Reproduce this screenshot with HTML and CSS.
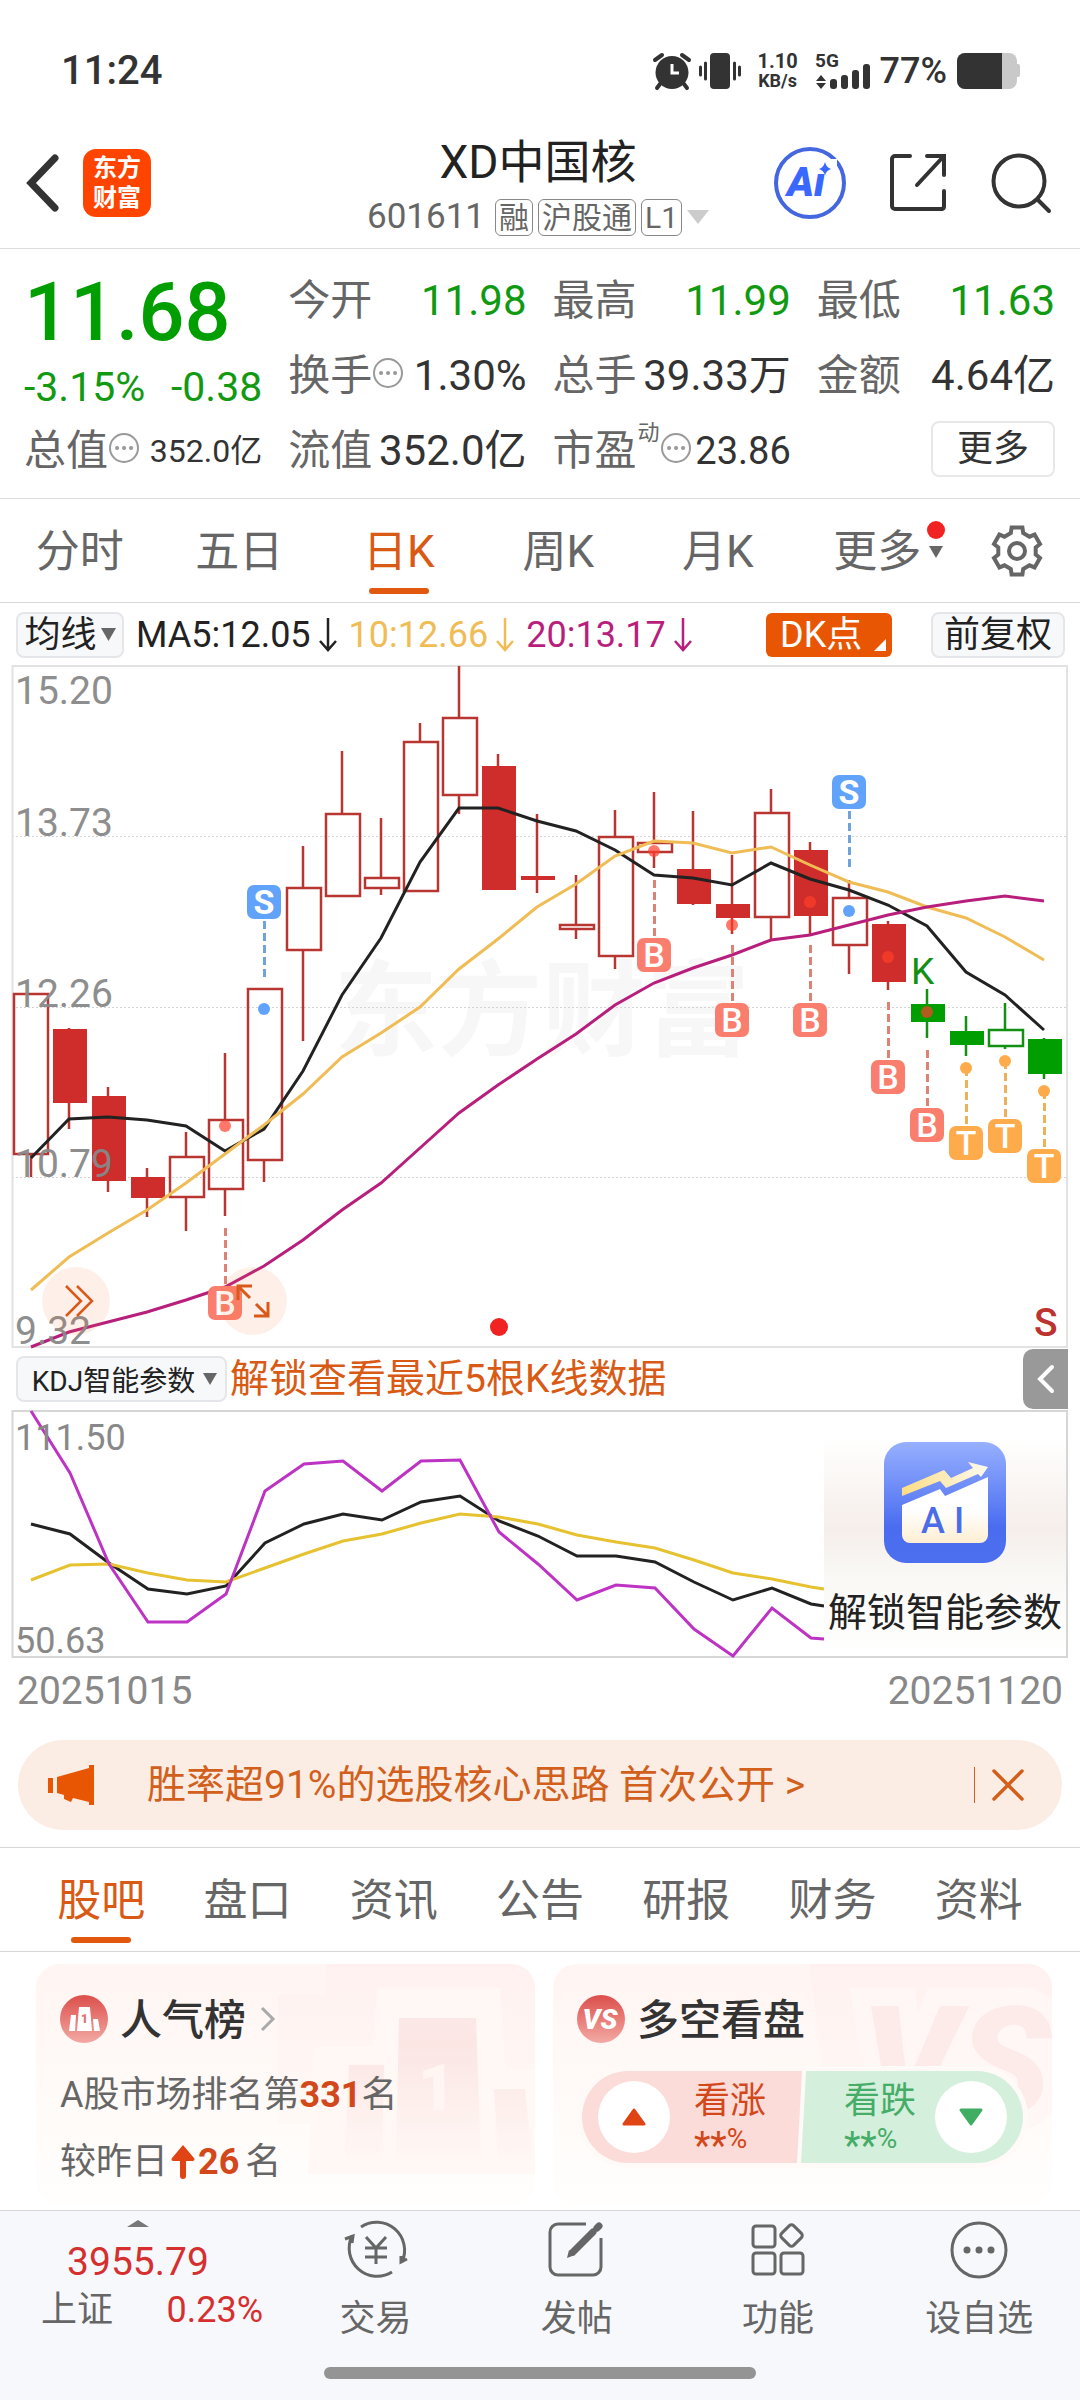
FILE: index.html
```html
<!DOCTYPE html>
<html lang="zh-CN">
<head>
<meta charset="utf-8">
<meta name="viewport" content="width=device-width, initial-scale=1">
<title>XD中国核 601611</title>
<link rel="stylesheet" href="styles.css">
</head>
<body>
<div class="status">
  <span class="clock">11:24</span>
  <div class="status-right">
    <svg class="st-alarm" width="38" height="36" viewBox="0 0 38 36"><circle cx="19" cy="19.500" r="16.500" fill="#333"/><path d="M2 7L9 2M36 7L29 2M7 31L4 35M31 31L34 35" stroke="#333" stroke-width="4" stroke-linecap="round"/><path d="M19 11V20H26" stroke="#fff" stroke-width="3" fill="none"/></svg>
    <svg class="st-vibe" width="42" height="36" viewBox="0 0 42 36"><rect x="11" y="0" width="20" height="36" rx="4" fill="#333"/><path d="M6.500 10V26M1.500 14V22M35.500 10V26M40.500 14V22" stroke="#333" stroke-width="3" stroke-linecap="round"/></svg>
    <div class="net"><b>1.10</b><b class="unit">KB/s</b></div>
    <svg class="st-signal" width="54" height="36" viewBox="0 0 54 36"><text x="-1" y="14" font-size="19" font-weight="700" fill="#333">5G</text><path d="M0 28L5 22L10 28ZM0 30L5 36L10 30Z" fill="#333"/><rect x="14" y="26" width="7" height="10" rx="3" fill="#333"/><rect x="25" y="22" width="7" height="14" rx="3" fill="#333"/><rect x="36" y="17" width="7" height="19" rx="3" fill="#333"/><rect x="47" y="11" width="7" height="25" rx="3" fill="#333"/></svg>
    <span class="pct">77%</span>
    <svg width="63" height="36" viewBox="0 0 63 36"><rect x="0" y="0" width="60" height="36" rx="8" fill="#c9c9c9"/><rect x="58" y="11" width="5" height="13" rx="2" fill="#c9c9c9"/><path d="M8 0H45V36H8A8 8 0 0 1 0 28V8A8 8 0 0 1 8 0Z" fill="#333"/></svg>
  </div>
</div>

<header class="header">
  <div class="head-left">
    <button class="plain" aria-label="返回"><svg width="34" height="58" viewBox="0 0 34 58"><path d="M30 4L6 29L30 54" fill="none" stroke="#333" stroke-width="7" stroke-linecap="round"/></svg></button>
    <div class="logo"><span>东方</span><span>财富</span></div>
  </div>
  <div class="head-title">
    <h1>XD中国核</h1>
    <div class="code"><span>601611</span><span class="badge first">融</span><span class="badge">沪股通</span><span class="badge">L1</span><svg class="drop" width="22" height="14" viewBox="0 0 22 14"><path d="M0 0H22L11 14Z" fill="#ccc"/></svg></div>
  </div>
  <div class="head-right">
    <button class="plain" aria-label="AI"><svg width="74" height="74" viewBox="0 0 74 74"><circle cx="37" cy="37" r="34" fill="#fff" stroke="#4467e0" stroke-width="4"/><text x="14" y="50" font-size="41" font-weight="900" font-style="italic" fill="#3a68ff">Ai</text><rect x="44" y="13" width="20" height="15" fill="#fff"/><path d="M52 16Q53.500 21.500 58 23Q53.500 24.500 52 29Q50.500 24.500 46 23Q50.500 21.500 52 16Z" fill="#3a68ff"/></svg></button>
    <button class="plain" aria-label="分享"><svg width="58" height="60" viewBox="0 0 58 60"><path d="M21 3H6A3 3 0 0 0 3 6V53A3 3 0 0 0 6 56H53A3 3 0 0 0 55 53V38M38 3H55V22M54 4L28 32" fill="none" stroke="#333" stroke-width="4" stroke-linecap="round"/></svg></button>
    <button class="plain" aria-label="搜索"><svg width="60" height="60" viewBox="0 0 60 60"><circle cx="28" cy="28" r="25.500" fill="none" stroke="#333" stroke-width="4"/><path d="M47 47L58 58" stroke="#333" stroke-width="4" stroke-linecap="round"/></svg></button>
  </div>
</header>

<section class="quote">
  <div class="price-box">
    <div class="price">11.68</div>
    <div class="change"><span>-3.15%</span><span>-0.38</span></div>
  </div>
  <div class="cell"><span class="lab">今开</span><span class="val green">11.98</span></div>
  <div class="cell"><span class="lab">最高</span><span class="val green">11.99</span></div>
  <div class="cell"><span class="lab">最低</span><span class="val green">11.63</span></div>
  <div class="cell"><span class="lab">换手<svg class="info" width="30" height="30" viewBox="0 0 30 30"><circle cx="15" cy="15" r="14" fill="none" stroke="#999" stroke-width="2"/><path d="M8 15h.1M15 15h.1M22 15h.1" stroke="#999" stroke-width="4" stroke-linecap="round"/></svg></span><span class="val">1.30%</span></div>
  <div class="cell"><span class="lab">总手</span><span class="val">39.33万</span></div>
  <div class="cell"><span class="lab">金额</span><span class="val">4.64亿</span></div>
  <div class="cell"><span class="lab">总值<svg class="info" width="30" height="30" viewBox="0 0 30 30"><circle cx="15" cy="15" r="14" fill="none" stroke="#999" stroke-width="2"/><path d="M8 15h.1M15 15h.1M22 15h.1" stroke="#999" stroke-width="4" stroke-linecap="round"/></svg></span><span class="val small">352.0亿</span></div>
  <div class="cell"><span class="lab">流值</span><span class="val">352.0亿</span></div>
  <div class="cell"><span class="lab">市盈<sup>动</sup><svg class="info" width="30" height="30" viewBox="0 0 30 30"><circle cx="15" cy="15" r="14" fill="none" stroke="#999" stroke-width="2"/><path d="M8 15h.1M15 15h.1M22 15h.1" stroke="#999" stroke-width="4" stroke-linecap="round"/></svg></span><span class="val mid">23.86</span></div>
  <div class="cell more"><button class="more-btn">更多</button></div>
</section>

<nav class="ktabs">
  <button class="tab">分时</button>
  <button class="tab">五日</button>
  <button class="tab active">日K</button>
  <button class="tab">周K</button>
  <button class="tab">月K</button>
  <button class="tab"><span class="tab-more">更多<i class="reddot"></i><i class="tri"></i></span></button>
  <button class="gear" aria-label="设置"><svg width="52" height="52" viewBox="0 0 52 52"><path d="M20.600 2.600H31.400L32.200 8L38.500 11.700L43.600 9.600L49 19L44.700 22.400V29.600L49 33L43.600 42.400L38.500 40.300L32.200 44L31.400 49.400H20.600L19.800 44L13.500 40.300L8.400 42.400L3 33L7.300 29.600V22.400L3 19L8.400 9.600L13.500 11.700L19.800 8Z" fill="none" stroke="#666" stroke-width="4"/><circle cx="26" cy="26" r="8" fill="none" stroke="#666" stroke-width="4"/></svg></button>
</nav>

<div class="mabar">
  <button class="chip ma-chip">均线<svg width="15" height="13" viewBox="0 0 15 13"><path d="M0 0H15L7.500 13Z" fill="#666"/></svg></button>
  <span class="ma ma5">MA5:12.05<svg width="18" height="34" viewBox="0 0 18 34"><path d="M9 0V32M1 23L9 32L17 23" fill="none" stroke="currentColor" stroke-width="2.500"/></svg></span>
  <span class="ma ma10">10:12.66<svg width="18" height="34" viewBox="0 0 18 34"><path d="M9 0V32M1 23L9 32L17 23" fill="none" stroke="currentColor" stroke-width="2.500"/></svg></span>
  <span class="ma ma20">20:13.17<svg width="18" height="34" viewBox="0 0 18 34"><path d="M9 0V32M1 23L9 32L17 23" fill="none" stroke="currentColor" stroke-width="2.500"/></svg></span>
  <button class="dk">DK点<i></i></button>
  <button class="chip adj">前复权</button>
</div>

<div class="chart">
  <svg class="plot" viewBox="0 665 1080 683">
    <text x="334" y="1048" font-size="104" font-weight="700" fill="#f7f7f7">东方财富</text>
    <g stroke="#d4d4d4" stroke-dasharray="2 2"><path d="M12 836.500H1067M12 1007.500H1067M12 1177.500H1067"/></g>
    <rect x="12.500" y="666" width="1054.500" height="681" fill="none" stroke="#e2e2e2" stroke-width="2"/>
    <!-- wicks -->
    <path stroke="#b73632" stroke-width="2.500" fill="none" d="M31 1154V1177M69 1028V1129M108 1087V1192M147 1168V1217M186 1132V1157M186 1197V1231M225 1053V1120M225 1189V1216M264 1160V1182M303 846V888M303 950V1041M342 751V814M381 818V878M381 888V895M420 723V742M459 666V718M459 795V814M498 754V890M537 814V893M576 875V925M576 929V939M615 810V837M615 956V969M654 792V843M654 852V868M693 811V905M732 855V934M771 789V813M771 917V939M810 842V934M849 880V898M849 945V974M888 921V990"/>
    <path stroke="#119011" stroke-width="2.500" d="M927 989V1038M966 1016V1056M1005 1003V1030M1005 1046V1049M1044 1038V1079"/>
    <!-- rising days -->
    <g fill="none" stroke="#b73632" stroke-width="2.500"><rect x="14" y="994" width="34" height="160"/><rect x="170" y="1157" width="34" height="40"/><rect x="209" y="1120" width="34" height="69"/><rect x="248" y="989" width="34" height="171"/><rect x="287" y="888" width="34" height="62"/><rect x="326" y="814" width="34" height="82"/><rect x="365" y="878" width="34" height="10"/><rect x="404" y="742" width="34" height="149"/><rect x="443" y="718" width="34" height="77"/><rect x="560" y="925" width="34" height="4"/><rect x="599" y="837" width="34" height="119"/><rect x="638" y="843" width="34" height="9"/><rect x="755" y="813" width="34" height="104"/><rect x="833" y="898" width="34" height="47"/></g>
    <rect x="989" y="1030" width="34" height="16" fill="#fff" stroke="#119011" stroke-width="2.500"/>
    <!-- falling days -->
    <g fill="#cf2d2b"><rect x="53" y="1029" width="34" height="74"/><rect x="92" y="1096" width="34" height="85"/><rect x="131" y="1177" width="34" height="21"/><rect x="482" y="766" width="34" height="124"/><rect x="521" y="876" width="34" height="4"/><rect x="677" y="869" width="34" height="35"/><rect x="716" y="904" width="34" height="14"/><rect x="794" y="850" width="34" height="66"/><rect x="872" y="924" width="34" height="58"/></g>
    <g fill="#009e00"><rect x="911" y="1004" width="34" height="18"/><rect x="950" y="1031" width="34" height="14"/><rect x="1028" y="1039" width="34" height="35"/></g>
    <g fill="none" stroke-width="3">
      <polyline stroke="#222" points="31,1158 69,1119 108,1117 147,1120 186,1126 225,1151 264,1129 303,1071 342,995 381,938 420,862 459,808 498,808 537,821 576,831 615,850 654,875 693,878 732,885 771,863 810,879 849,890 888,905 927,926 966,972 1005,995 1044,1030"/>
      <polyline stroke="#f0bc55" points="31,1290 69,1257 108,1233 147,1210 186,1183 225,1154 264,1125 303,1094 342,1057 381,1033 420,1007 459,969 498,939 537,907 576,884 615,856 654,841 693,843 732,853 771,847 810,865 849,882 888,892 927,907 966,918 1005,937 1044,960"/>
      <polyline stroke="#b81f7c" points="31,1347 69,1332 108,1322 147,1312 186,1300 225,1287 264,1266 303,1240 342,1210 381,1183 420,1148 459,1113 498,1085 537,1059 576,1034 615,1005 654,983 693,968 732,955 771,940 810,935 849,925 888,915 927,907 966,901 1005,896 1044,901"/>
    </g>
    <!-- buy, sell and T signals -->
    <g stroke-width="3" stroke-dasharray="8 4">
      <path stroke="#6fa3dc" d="M264.500 921V978M849.500 811V867"/>
      <path stroke="#df8276" d="M225.500 1228V1285M654.500 880V936M732.500 945V1001M810.500 945V1001M888.500 1002V1058M927.500 1050V1106"/>
      <path stroke="#efb05c" d="M966.500 1068V1124M1005.500 1061V1117M1044.500 1091V1148"/>
    </g>
    <g fill="#61a2fb"><circle cx="264" cy="1009" r="6"/><circle cx="849" cy="911" r="6"/><rect x="247" y="885" width="34" height="34" rx="7"/><rect x="832" y="775" width="34" height="34" rx="7"/></g>
    <g fill="#ff3e2b" fill-opacity=".7"><circle cx="225" cy="1126" r="6"/><circle cx="654" cy="851" r="6"/><circle cx="732" cy="925" r="6"/><circle cx="810" cy="902" r="6"/><circle cx="888" cy="957" r="6"/><circle cx="927" cy="1012" r="6"/></g>
    <g fill="#fa7e6e"><rect x="208" y="1286" width="34" height="34" rx="7"/><rect x="637" y="938" width="34" height="34" rx="7"/><rect x="715" y="1003" width="34" height="34" rx="7"/><rect x="793" y="1003" width="34" height="34" rx="7"/><rect x="871" y="1060" width="34" height="34" rx="7"/><rect x="910" y="1108" width="34" height="34" rx="7"/></g>
    <g fill="#fdab4b"><circle cx="966" cy="1068" r="6"/><circle cx="1005" cy="1061" r="6"/><circle cx="1044" cy="1091" r="6"/><rect x="949" y="1126" width="34" height="34" rx="7"/><rect x="988" y="1119" width="34" height="34" rx="7"/><rect x="1027" y="1149" width="34" height="34" rx="7"/></g>
    <g fill="#fff" font-size="34" font-weight="500" text-anchor="middle"><text x="264" y="914" font-weight="700">S</text><text x="849" y="804" font-weight="700">S</text><text x="225" y="1315">B</text><text x="654" y="967">B</text><text x="732" y="1032">B</text><text x="810" y="1032">B</text><text x="888" y="1089">B</text><text x="927" y="1137">B</text><text x="966" y="1155">T</text><text x="1005" y="1148">T</text><text x="1044" y="1178">T</text></g>
    <text x="911" y="984" font-size="37" fill="#119011">K</text>
    <text x="1034" y="1336" font-size="39" font-weight="500" fill="#bd332f">S</text>
    <circle cx="499" cy="1327" r="9" fill="#f02222"/>
    <g fill="#888" font-size="39" opacity=".95"><text x="15" y="704">15.20</text><text x="15" y="836">13.73</text><text x="15" y="1007">12.26</text><text x="15" y="1177">10.79</text><text x="15" y="1344">9.32</text></g>
  </svg>
  <button class="float skip" aria-label="最新"><svg width="28" height="32" viewBox="0 0 28 32"><path d="M1 1L16 16L1 31M12 1L27 16L12 31" fill="none" stroke="#d9591a" stroke-width="2.500"/></svg></button>
  <button class="float expand" aria-label="全屏"><svg width="34" height="34" viewBox="0 0 34 34"><path d="M2 16V2H16M2 2L14 14M32 18V32H18M32 32L20 20" fill="none" stroke="#d9591a" stroke-width="3"/></svg></button>
</div>

<div class="kdjbar">
  <button class="chip kdj-chip">KDJ智能参数<svg width="14" height="12" viewBox="0 0 14 12"><path d="M0 0H14L7 12Z" fill="#666"/></svg></button>
  <a class="unlock" href="#">解锁查看最近5根K线数据</a>
  <button class="side" aria-label="展开"><svg width="18" height="28" viewBox="0 0 18 28"><path d="M15 2L3 14L15 26" fill="none" stroke="#fff" stroke-width="4" stroke-linecap="round"/></svg></button>
</div>

<div class="chart">
  <svg class="plot" viewBox="0 1410 1080 248">
    <rect x="12.500" y="1411" width="1054.500" height="246" fill="none" stroke="#d6d6d6" stroke-width="2"/>
    <g fill="none" stroke-width="3">
      <polyline stroke="#222" points="31,1524 70,1534 109,1563 148,1589 187,1594 226,1586 265,1543 304,1524 343,1514 382,1520 421,1502 460,1496 499,1521 538,1536 577,1556 616,1556 655,1562 694,1582 733,1600 772,1588 811,1604 824,1606"/>
      <polyline stroke="#e6c231" points="31,1580 70,1565 109,1564 148,1573 187,1580 226,1582 265,1568 304,1554 343,1541 382,1534 421,1523 460,1514 499,1517 538,1524 577,1535 616,1542 655,1548 694,1560 733,1573 772,1579 811,1587 824,1589"/>
      <polyline stroke="#bd33c4" points="31,1411 70,1473 109,1564 148,1622 187,1622 226,1594 265,1491 304,1464 343,1461 382,1491 421,1461 460,1460 499,1532 538,1564 577,1600 616,1585 655,1588 694,1629 733,1656 772,1608 811,1638 824,1639"/>
    </g>
    <g fill="#888" font-size="36"><text x="15" y="1450">111.50</text><text x="15" y="1653">50.63</text></g>
  </svg>
  <button class="ai-panel">
    <svg width="122" height="121" viewBox="0 0 122 121">
      <defs><linearGradient id="aiBg" x1="0" y1="0" x2="0" y2="1"><stop offset="0" stop-color="#97b0ff"/><stop offset=".7" stop-color="#4a6df0"/><stop offset="1" stop-color="#4c6fef"/></linearGradient><linearGradient id="aiBox" x1="0" y1="0" x2="0" y2="1"><stop offset=".5" stop-color="#fff"/><stop offset="1" stop-color="#feeed2"/></linearGradient><linearGradient id="aiUp" x1="0" y1="0" x2="1" y2="0"><stop offset="0" stop-color="#fddd83"/><stop offset="1" stop-color="#fffaf0"/></linearGradient></defs>
      <rect width="122" height="121" rx="22" fill="url(#aiBg)"/>
      <path d="M18 46L60 28L67 36L89 26L84 20L104 25L97 35L94 32L62 46L56 39L18 54Z" fill="url(#aiUp)"/>
      <path d="M18 63L56 47L61 54L104 35V93A8 8 0 0 1 96 101H26A8 8 0 0 1 18 93Z" fill="url(#aiBox)"/>
      <g font-size="36" font-weight="500" fill="#4b6de8"><text x="37" y="91">A</text><text x="70" y="91">I</text></g>
    </svg>
    <span>解锁智能参数</span>
  </button>
</div>
<div class="dates"><span>20251015</span><span>20251120</span></div>

<aside class="banner">
  <svg width="46" height="40" viewBox="0 0 46 40"><rect x="0" y="13" width="5" height="15" fill="#e85604"/><path d="M9 12L41 3V0H46V40H41V37L25 33L23 37L16 34V30L9 28Z" fill="#e85604"/></svg>
  <a href="#">胜率超91%的选股核心思路 首次公开 &gt;</a>
  <button class="plain close" aria-label="关闭"><svg width="32" height="32" viewBox="0 0 32 32"><path d="M2 2L30 30M30 2L2 30" stroke="#d2601c" stroke-width="3.500" stroke-linecap="round"/></svg></button>
</aside>

<nav class="tabs2">
  <button class="tab active">股吧</button>
  <button class="tab">盘口</button>
  <button class="tab">资讯</button>
  <button class="tab">公告</button>
  <button class="tab">研报</button>
  <button class="tab">财务</button>
  <button class="tab">资料</button>
</nav>

<main class="cards">
  <section class="card">
    <svg class="card-bg" width="260" height="241" viewBox="239 0 260 241">
      <defs><linearGradient id="pod" gradientUnits="userSpaceOnUse" x1="0" y1="0" x2="0" y2="200"><stop offset="0" stop-color="#fdecea"/><stop offset=".4" stop-color="#fbe6e4"/><stop offset="1" stop-color="#fff8f5"/></linearGradient><linearGradient id="podBack" gradientUnits="userSpaceOnUse" x1="0" y1="0" x2="0" y2="160"><stop offset="0" stop-color="#fff1ef"/><stop offset="1" stop-color="#fff9f6"/></linearGradient></defs>
      <path d="M290 0H499V160H242V31H289Z" fill="url(#podBack)"/>
      <path d="M278 82H337L341 24H464L470 105H499V210H272Z" fill="#fff8f5"/>
      <path d="M313 101H348L346 196H309ZM363 54H440L445 196H360ZM458 125H489L496 196H462Z" fill="url(#pod)"/>
      <text x="382" y="146" font-size="64" font-weight="900" fill="#fff6f3">1</text>
    </svg>
    <h2><svg width="48" height="48" viewBox="0 0 48 48"><defs><linearGradient id="ic" x1="0" y1="0" x2="0" y2="1"><stop offset="0" stop-color="#dc4f4b"/><stop offset="1" stop-color="#f3a9a4"/></linearGradient></defs><circle cx="24" cy="24" r="24" fill="url(#ic)"/><path d="M11 20H16L15 36H9ZM19 12H30L32 36H17ZM33 24H38L40 36H34Z" fill="#fff"/><text x="21" y="28" font-size="12" font-weight="900" fill="#e5706c">1</text></svg><span>人气榜</span><svg class="go" width="15" height="24" viewBox="0 0 15 24"><path d="M2 1L13 12L2 23" fill="none" stroke="#aaa" stroke-width="3"/></svg></h2>
    <p class="rank">A股市场排名第<b>331</b>名</p>
    <p class="delta">较昨日<svg width="24" height="34" viewBox="0 0 24 34"><path d="M12 0L23 13A2 2 0 0 1 22 16H15V31A3 3 0 0 1 9 31V16H2A2 2 0 0 1 1 13Z" fill="#e04414"/></svg><b>26</b>名</p>
  </section>
  <section class="card">
    <svg class="card-bg" width="260" height="241" viewBox="239 0 260 241">
      <path d="M256 0H499V110H270Z" fill="url(#podBack)"/>
      <text x="308" y="150" font-size="152" font-weight="900" font-style="italic" fill="#fdebe9" stroke="#fff7f5" stroke-width="36" paint-order="stroke">VS</text>
    </svg>
    <h2><svg width="48" height="48" viewBox="0 0 48 48"><circle cx="24" cy="24" r="24" fill="url(#ic)"/><text x="23" y="34" font-size="28" font-weight="900" font-style="italic" fill="#fff" text-anchor="middle">VS</text></svg><span>多空看盘</span></h2>
    <div class="vote">
      <button class="side-btn up"><span class="knob"><svg width="24" height="18" viewBox="0 0 24 18"><path d="M12 2L22 16H2Z" fill="#e04414" stroke="#e04414" stroke-width="3" stroke-linejoin="round"/></svg></span><span class="vt"><span>看涨</span><small><i>**</i>%</small></span></button>
      <button class="side-btn down"><span class="vt"><span>看跌</span><small><i>**</i>%</small></span><span class="knob"><svg width="24" height="18" viewBox="0 0 24 18"><path d="M12 16L22 2H2Z" fill="#3fae63" stroke="#3fae63" stroke-width="3" stroke-linejoin="round"/></svg></span></button>
    </div>
  </section>
</main>

<footer class="bottom">
  <div class="bottom-row">
    <button class="index">
      <svg width="22" height="7" viewBox="0 0 22 7"><path d="M0 7L11 0L22 7Z" fill="#777"/></svg>
      <span class="idx-val">3955.79</span>
      <span class="idx-row"><span>上证</span><span class="red">0.23%</span></span>
    </button>
    <button class="nav-item"><svg width="66" height="58" viewBox="0 0 66 58"><path d="M18 6A28 28 0 0 1 59 41M49 51A28 28 0 0 1 9 15M2 18L10 15L9 22M64 38L58 41L58 35" fill="none" stroke="#666" stroke-width="3"/><path d="M23 16L33 27L43 16M33 27V43M22 27H44M22 36H44" fill="none" stroke="#666" stroke-width="3"/></svg><span>交易</span></button>
    <button class="nav-item"><svg width="66" height="58" viewBox="0 0 66 58"><path d="M42 3H14A8 8 0 0 0 6 11V46A8 8 0 0 0 14 54H49A8 8 0 0 0 57 46V17" fill="none" stroke="#666" stroke-width="3"/><path d="M29 31L49 11M53 7L55 5" stroke="#666" stroke-width="7" stroke-linecap="round"/><path d="M23 37L25 29L31 34Z" fill="#666"/></svg><span>发帖</span></button>
    <button class="nav-item"><svg width="66" height="58" viewBox="0 0 66 58"><g fill="none" stroke="#666" stroke-width="3"><rect x="8" y="5" width="22" height="21" rx="3"/><rect x="8" y="32" width="22" height="21" rx="3"/><rect x="36" y="32" width="22" height="21" rx="3"/><rect x="38" y="6" width="17" height="17" rx="3" transform="rotate(45 46.500 14.500)"/></g></svg><span>功能</span></button>
    <button class="nav-item"><svg width="66" height="58" viewBox="0 0 66 58"><circle cx="33" cy="29" r="27" fill="none" stroke="#666" stroke-width="3"/><circle cx="21" cy="29" r="3.500" fill="#666"/><circle cx="33" cy="29" r="3.500" fill="#666"/><circle cx="45" cy="29" r="3.500" fill="#666"/></svg><span>设自选</span></button>
  </div>
  <div class="handle"></div>
</footer>
</body>
</html>
```
FILE: styles.css
```css
* { box-sizing: border-box; }
body {
  margin: 0;
  min-height: 100vh;
  display: flex;
  flex-direction: column;
  background: #fff;
  color: #333;
  font-family: Roboto, "Noto Sans CJK SC", sans-serif;
}
button {
  margin: 0;
  padding: 0;
  border: 0;
  background: none;
  color: inherit;
  font: inherit;
}
svg { display: block; flex: none; overflow: visible; }
a { color: inherit; text-decoration: none; }
i { font-style: normal; }
h1, h2, p { margin: 0; }
.plain { display: flex; }

.status {
  display: flex;
  justify-content: space-between;
  align-items: center;
  padding: 47px 60px 25px 61px;
  line-height: 48px;
}
.clock { font-size: 40px; font-weight: 500; }
.status-right { display: flex; align-items: center; }
.st-vibe { margin-left: 8px; }
.net {
  display: flex;
  flex-direction: column;
  align-items: center;
  width: 42px;
  margin: 0 17px 0 16px;
  font-size: 20px;
  line-height: 19px;
}
.net .unit { font-size: 18px; }
.pct { margin: 0 10px; font-size: 36px; font-weight: 500; }

.header {
  display: grid;
  grid-template-columns: 1fr auto 1fr;
  align-items: center;
  padding: 12px 29px 12px 25px;
  border-bottom: 1px solid #dcdcdc;
}
.head-left { display: flex; align-items: center; gap: 24px; }
.logo {
  display: flex;
  flex-direction: column;
  align-items: center;
  justify-content: center;
  width: 68px;
  height: 68px;
  border-radius: 13px;
  background: #ff4400;
  color: #fff;
  font-size: 24px;
  font-weight: 700;
  line-height: 30px;
}
.head-left, .head-right { margin-bottom: 3px; }
.head-title { text-align: center; }
h1 { padding-top: 2px; font-size: 46px; font-weight: 400; line-height: 56px; color: #222; }
.code {
  display: flex;
  align-items: center;
  gap: 5px;
  margin-top: 8px;
  font-size: 35px;
  line-height: 38px;
  color: #666;
}
.badge {
  padding: 0 3px;
  border: 1px solid #888;
  border-radius: 6px;
  font-size: 30px;
  line-height: 35px;
}
.badge.first { margin-left: 5px; }
.head-right { display: flex; justify-content: flex-end; align-items: center; gap: 42px; }
.head-right .plain:last-child { margin-left: 2px; }

.quote {
  display: grid;
  grid-template-columns: repeat(4, 1fr);
  grid-auto-rows: 75px;
  column-gap: 26px;
  padding: 14px 25px 10px 24px;
  border-bottom: 1px solid #dcdcdc;
}
.price-box { grid-row: span 2; color: #009e00; }
.price { font-size: 81px; font-weight: 500; line-height: 100px; }
.change {
  display: flex;
  justify-content: space-between;
  font-size: 41px;
  line-height: 48px;
  color: #119a11;
}
.cell {
  display: flex;
  justify-content: space-between;
  align-items: center;
  font-size: 42px;
  line-height: 60px;
  white-space: nowrap;
}
.lab { display: flex; align-items: center; color: #666; }
.lab sup { align-self: flex-start; margin-left: 1px; font-size: 22px; line-height: 24px; }
.info { margin-left: 1px; margin-bottom: 5px; }
.green { color: #119a11; }
.small { font-size: 32px; }
.mid { font-size: 38px; }
.more { justify-content: flex-end; }
.more-btn {
  width: 124px;
  height: 56px;
  margin-bottom: 3px;
  border: 2px solid #e8e8e8;
  border-radius: 8px;
  font-size: 36px;
  line-height: 48px;
}

.ktabs, .tabs2 {
  display: flex;
  height: 104px;
  border-bottom: 1px solid #d8d8d8;
  font-size: 44px;
  line-height: 60px;
  color: #666;
}
.ktabs { padding-right: 3px; }
.tab {
  position: relative;
  flex: 1;
  padding-top: 2px;
  text-align: center;
}
.tab.active { color: #d95a14; }
.tab.active::after {
  content: "";
  position: absolute;
  left: calc(50% - 30px);
  bottom: 8px;
  width: 60px;
  height: 6px;
  border-radius: 3px;
  background: #e0590f;
}
.tab-more { position: relative; }
.reddot {
  position: absolute;
  right: -24px;
  top: -5px;
  width: 18px;
  height: 18px;
  border-radius: 50%;
  background: #f02222;
}
.tri {
  position: absolute;
  right: -22px;
  top: 20px;
  border: 7px solid transparent;
  border-top: 12px solid #666;
  border-bottom: 0;
}
.gear { display: flex; justify-content: center; align-items: center; width: 120px; }

.mabar {
  display: flex;
  align-items: center;
  height: 62px;
  padding: 1px 15px 0 16px;
  font-size: 36px;
  line-height: 44px;
  white-space: nowrap;
}
.chip {
  display: flex;
  align-items: center;
  justify-content: center;
  height: 46px;
  border: 2px solid #e4e6ea;
  border-radius: 8px;
  background: #f7f8fa;
  color: #222;
}
.ma-chip { gap: 4px; width: 108px; margin-right: 12px; }
.ma { display: flex; align-items: center; gap: 8px; margin-right: 12px; }
.ma5 { color: #222; }
.ma10 { color: #f0bc55; }
.ma20 { color: #b81f7c; }
.dk {
  position: relative;
  width: 126px;
  height: 44px;
  margin-left: auto;
  margin-right: 39px;
  padding-left: 14px;
  border-radius: 6px;
  background: #e85604;
  color: #fff;
  text-align: left;
}
.dk i {
  position: absolute;
  right: 6px;
  bottom: 6px;
  border: 6px solid #fff;
  border-top-color: transparent;
  border-left-color: transparent;
}
.adj { width: 134px; }

.chart { position: relative; }
.plot { width: 100%; height: auto; }
.float {
  position: absolute;
  bottom: 13px;
  display: flex;
  align-items: center;
  justify-content: center;
  width: 68px;
  height: 68px;
  border-radius: 50%;
  background: rgba(250, 120, 50, 0.11);
}
.skip { left: 42px; padding-left: 6px; }
.expand { left: 219px; }

.kdjbar {
  display: flex;
  align-items: center;
  height: 62px;
  padding: 0 12px 0 16px;
}
.kdj-chip { gap: 8px; width: 211px; padding-left: 6px; font-size: 28px; }
.unlock {
  margin-left: 3px;
  font-size: 39px;
  line-height: 56px;
  color: #d95a14;
  white-space: nowrap;
}
.side {
  display: flex;
  align-items: center;
  justify-content: center;
  width: 45px;
  height: 60px;
  margin-left: auto;
  border-radius: 10px 0 0 10px;
  background: #999;
}
.ai-panel {
  position: absolute;
  top: 2px;
  right: 14px;
  bottom: 2px;
  width: 242px;
  display: flex;
  flex-direction: column;
  align-items: center;
  padding-top: 30px;
  background: linear-gradient(#fff 10%, #f6eeea 48%, #f9f8f5 66%, #fff);
  color: #222;
  font-size: 39px;
  line-height: 56px;
  white-space: nowrap;
}
.ai-panel span { margin-top: 22px; }
.dates {
  display: flex;
  justify-content: space-between;
  padding: 11px 17px 27px;
  font-size: 39px;
  line-height: 44px;
  color: #888;
}

.banner {
  display: flex;
  align-items: center;
  height: 90px;
  margin: 0 18px 17px;
  padding: 0 38px 0 30px;
  border-radius: 45px;
  background: #fcede4;
  color: #d2601c;
  font-size: 39px;
  line-height: 56px;
}
.banner a { margin-left: 53px; white-space: nowrap; }
.close { margin-left: auto; padding: 2px 0 2px 17px; border-left: 1px solid #d2601c; }

.tabs2 { height: 105px; padding: 0 28px; border-top: 1px solid #d8d8d8; }

.cards {
  flex: 1;
  display: grid;
  grid-template-columns: 1fr 1fr;
  gap: 18px;
  padding: 12px 28px 5px 36px;
}
.card {
  position: relative;
  overflow: hidden;
  padding: 25px 24px 0;
  border-radius: 24px;
  background: linear-gradient(#fff5f3, #fffaf7 50%, #fffefd);
}
.card-bg { position: absolute; top: 0; right: 0; }
.card > :not(.card-bg) { position: relative; }
h2 {
  display: flex;
  align-items: center;
  gap: 12px;
  font-size: 42px;
  font-weight: 500;
  line-height: 56px;
}
h2 span { padding-top: 4px; }
.go { margin-left: 2px; }
.rank, .delta {
  display: flex;
  align-items: center;
  font-size: 36px;
  line-height: 44px;
  color: #666;
}
.rank { margin-top: 24px; }
.delta { margin-top: 23px; }
.delta svg { margin: 0 3px; }
.delta b { margin-right: 6px; }
.card b { color: #d2481b; }

.vote {
  display: flex;
  gap: 5px;
  width: 451px;
  margin-top: 17px;
  border: 5px solid #fffaf8;
  border-radius: 51px;
  background: #fffaf8;
  overflow: hidden;
}
.side-btn {
  display: flex;
  align-items: center;
  justify-content: space-between;
  height: 92px;
}
.up { width: 220px; padding: 0 36px 0 16px; background: #fcdcd9; color: #d2481b; clip-path: polygon(0 0, 100% 0, 215px 100%, 0 100%); }
.down { width: 222px; margin-left: -6px; padding: 0 16px 0 43px; background: #d5efdd; color: #45ad67; clip-path: polygon(5px 0, 100% 0, 100% 100%, 0 100%); }
.knob {
  display: flex;
  align-items: center;
  justify-content: center;
  width: 72px;
  height: 72px;
  border-radius: 50%;
  background: #fff;
}
.vt { display: flex; flex-direction: column; text-align: left; font-size: 36px; line-height: 44px; }
.vt small { font-size: 28px; line-height: 32px; }
.vt i { font-size: 38px; line-height: 20px; vertical-align: -11px; }

.bottom { border-top: 1px solid #d4d6d9; background: #f7f8fb; }
.bottom-row {
  display: grid;
  grid-template-columns: 275px repeat(4, 1fr);
  height: 156px;
}
.index {
  display: flex;
  flex-direction: column;
  align-items: stretch;
  padding: 9px 12px 0 41px;
  font-size: 36px;
  line-height: 40px;
  text-align: center;
  color: #666;
}
.index svg { align-self: center; margin-right: 28px; }
.idx-val {
  margin: 14px 28px 0 0;
  font-size: 39px;
  line-height: 42px;
  color: #d5302f;
}
.idx-row { display: flex; justify-content: space-between; margin-top: 7px; }
.red { color: #d5302f; }
.nav-item {
  display: flex;
  flex-direction: column;
  align-items: center;
  padding-top: 10px;
  font-size: 36px;
  line-height: 48px;
  color: #666;
}
.nav-item span { margin-top: 16px; }
.handle {
  width: 40%;
  height: 12px;
  margin: 0 auto 21px;
  border-radius: 6px;
  background: #949494;
}
```
